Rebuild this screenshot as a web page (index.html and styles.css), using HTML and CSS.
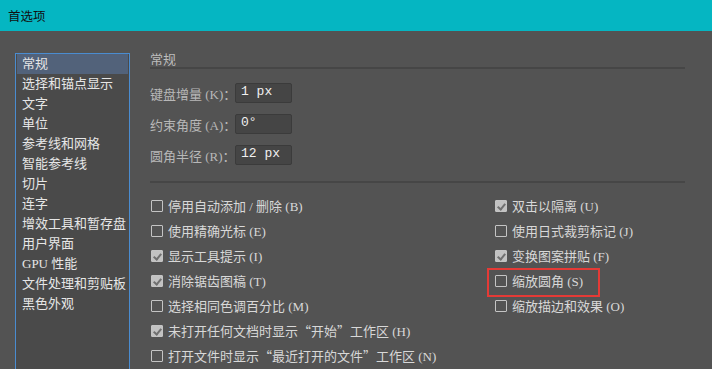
FILE: index.html
```html
<!DOCTYPE html>
<html lang="zh">
<head>
<meta charset="utf-8">
<title>首选项</title>
<link rel="stylesheet" href="styles.css">
</head>
<body>
<div class="titlebar">首选项</div>
<div class="main">
  <ul class="sidebar">
    <li class="item active">常规</li>
    <li class="item">选择和锚点显示</li>
    <li class="item">文字</li>
    <li class="item">单位</li>
    <li class="item">参考线和网格</li>
    <li class="item">智能参考线</li>
    <li class="item">切片</li>
    <li class="item">连字</li>
    <li class="item">增效工具和暂存盘</li>
    <li class="item">用户界面</li>
    <li class="item">GPU 性能</li>
    <li class="item">文件处理和剪贴板</li>
    <li class="item">黑色外观</li>
  </ul>
  <div class="content">
    <div class="heading">常规</div>
    <div class="fields">
      <div class="field"><span class="label">键盘增量 (K)：</span><span class="input">1 px</span></div>
      <div class="field"><span class="label">约束角度 (A)：</span><span class="input">0°</span></div>
      <div class="field"><span class="label">圆角半径 (R)：</span><span class="input">12 px</span></div>
    </div>
    <div class="options">
      <div class="col left">
        <div class="opt"><span class="cb"></span>停用自动添加 / 删除 (B)</div>
        <div class="opt"><span class="cb"></span>使用精确光标 (E)</div>
        <div class="opt"><span class="cb on"></span>显示工具提示 (I)</div>
        <div class="opt"><span class="cb on"></span>消除锯齿图稿 (T)</div>
        <div class="opt"><span class="cb"></span>选择相同色调百分比 (M)</div>
        <div class="opt"><span class="cb on"></span>未打开任何文档时显示<span class="q">“</span>开始<span class="q">”</span>工作区 (H)</div>
        <div class="opt"><span class="cb"></span>打开文件时显示<span class="q">“</span>最近打开的文件<span class="q">”</span>工作区 (N)</div>
      </div>
      <div class="col right">
        <div class="opt"><span class="cb on"></span>双击以隔离 (U)</div>
        <div class="opt"><span class="cb"></span>使用日式裁剪标记 (J)</div>
        <div class="opt"><span class="cb on"></span>变换图案拼贴 (F)</div>
        <div class="opt marked"><span class="cb"></span>缩放圆角 (S)</div>
        <div class="opt"><span class="cb"></span>缩放描边和效果 (O)</div>
      </div>
    </div>
  </div>
</div>
</body>
</html>
```

FILE: styles.css
```css
* { box-sizing: border-box; }
html, body {
  margin: 0;
  padding: 0;
  width: 712px;
  height: 369px;
  overflow: hidden;
  background: #535353;
  font-family: "Liberation Serif", "Noto Sans CJK SC", sans-serif;
  font-size: 13px;
}
.titlebar {
  height: 31px;
  background: #05b6c2;
  color: #111;
  font-family: "Noto Sans CJK SC", sans-serif;
  font-size: 12.5px;
  line-height: 31px;
  padding-left: 8px;
}
.main {
  display: flex;
  padding: 22px 0 0 15px;
}
.sidebar {
  list-style: none;
  margin: 0;
  padding: 0 1px;
  width: 115px;
  height: 320px;
  border: 1px solid #4a8cd0;
  background: #4a4a4a;
  flex: none;
}
.item {
  height: 20px;
  line-height: 19px;
  padding-left: 5px;
  color: #e6e6e6;
  white-space: nowrap;
}
.item.active {
  background: #52627a;
}
.content {
  margin-left: 20px;
  width: 535px;
}
.heading {
  color: #bdbdbd;
  height: 16px;
  line-height: 13px;
  border-bottom: 2px solid #464646;
}
.fields {
  padding-top: 14px;
  padding-bottom: 16px;
  border-bottom: 2px solid #464646;
  display: flex;
  flex-direction: column;
  gap: 11px;
}
.field {
  display: flex;
  align-items: center;
  height: 20px;
}
.label {
  width: 85px;
  color: #b8b8b8;
  white-space: nowrap;
}
.input {
  width: 57px;
  height: 20px;
  background: #454545;
  border: 1px solid #3b3b3b;
  border-radius: 2px;
  color: #f0f0f0;
  font-family: "Liberation Mono", monospace;
  font-size: 13px;
  line-height: 16px;
  padding-left: 5px;
}
.options {
  display: flex;
  padding-top: 10px;
  padding-left: 1px;
}
.col {
  display: flex;
  flex-direction: column;
}
.col.left { width: 344px; }
.opt {
  position: relative;
  display: flex;
  align-items: center;
  height: 25px;
  color: #d8d8d8;
  white-space: nowrap;
}
.q {
  font-family: "Noto Sans CJK SC", sans-serif;
  display: inline-block;
  width: 13px;
  text-align: center;
}
.cb {
  width: 12px;
  height: 12px;
  border: 1px solid #c4c4c4;
  border-radius: 1px;
  margin-right: 5px;
  position: relative;
  flex: none;
}
.cb.on {
  background: #c2c2c2;
}
.cb.on::after {
  content: "";
  position: absolute;
  left: 3px;
  top: 1px;
  width: 3px;
  height: 6px;
  border-right: 2px solid #707070;
  border-bottom: 2px solid #707070;
  transform: rotate(40deg);
}
.marked::before {
  content: "";
  position: absolute;
  left: -8px;
  top: 0px;
  width: 109px;
  height: 25px;
  border: 2px solid #e53a36;
}
```
